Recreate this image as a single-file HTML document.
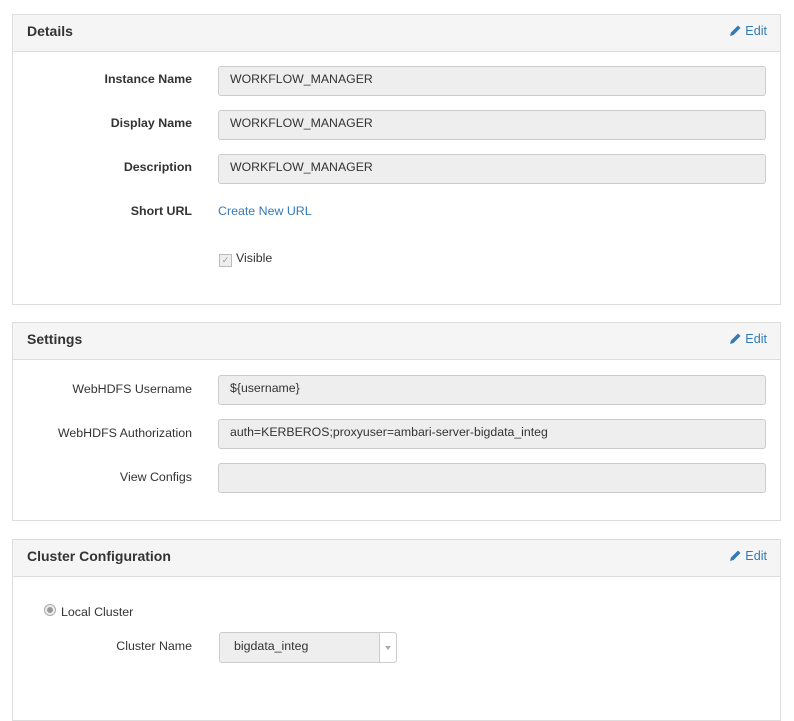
<!DOCTYPE html>
<html><head><style>
body{margin:0;background:#fff;font-family:"Liberation Sans",sans-serif;font-size:12.4px;color:#333;position:relative;width:794px;height:701px;overflow:hidden}
.p{position:absolute;left:12px;width:767px;border:1px solid #ddd;background:#fff}
.h{height:36px;background:#f5f5f5;border-bottom:1px solid #ddd;position:relative}
.h b{position:absolute;left:14px;top:8px;font-size:14px;font-weight:bold;color:#333}
.e{position:absolute;right:13px;top:9px;color:#337ab7;font-size:12.6px}
.e svg{vertical-align:-2px;margin-right:3px}
.l{position:absolute;width:179px;left:0;text-align:right;font-size:12.4px}
.i{position:absolute;left:205px;width:534px;height:28px;border:1px solid #ccc;border-radius:3px;background:#eee;line-height:24px;padding-left:11px;box-sizing:content-box;font-size:12.3px}
</style></head><body>
<div class="p" style="top:14px;height:289px">
 <div class="h"><b>Details</b><span class="e"><svg width="13" height="13" viewBox="0 0 13 13"><path d="M1 12l1-3.5 7-7 2.5 2.5-7 7z" fill="#337ab7"/></svg>Edit</span></div>
 <div class="l" style="top:57px;font-weight:bold">Instance Name</div><div class="i" style="top:51px;width:535px">WORKFLOW_MANAGER</div>
 <div class="l" style="top:101px;font-weight:bold">Display Name</div><div class="i" style="top:95px;width:535px">WORKFLOW_MANAGER</div>
 <div class="l" style="top:145px;font-weight:bold">Description</div><div class="i" style="top:139px;width:535px">WORKFLOW_MANAGER</div>
 <div class="l" style="top:189px;font-weight:bold">Short URL</div><div style="position:absolute;left:205px;top:189px;color:#337ab7">Create New URL</div>
 <div style="position:absolute;left:206px;top:239px;width:11px;height:11px;border:1px solid #bbb;background:#eee;font-size:9px;line-height:11px;text-align:center;color:#999">✓</div>
 <div style="position:absolute;left:223px;top:236px">Visible</div>
</div>
<div class="p" style="top:322px;height:197px">
 <div class="h"><b>Settings</b><span class="e"><svg width="13" height="13" viewBox="0 0 13 13"><path d="M1 12l1-3.5 7-7 2.5 2.5-7 7z" fill="#337ab7"/></svg>Edit</span></div>
 <div class="l" style="top:59px">WebHDFS Username</div><div class="i" style="top:52px;width:535px">${username}</div>
 <div class="l" style="top:103px">WebHDFS Authorization</div><div class="i" style="top:96px;width:535px">auth=KERBEROS;proxyuser=ambari-server-bigdata_integ</div>
 <div class="l" style="top:147px">View Configs</div><div class="i" style="top:140px;width:535px"></div>
</div>
<div class="p" style="top:539px;height:180px">
 <div class="h"><b>Cluster Configuration</b><span class="e"><svg width="13" height="13" viewBox="0 0 13 13"><path d="M1 12l1-3.5 7-7 2.5 2.5-7 7z" fill="#337ab7"/></svg>Edit</span></div>
 <div style="position:absolute;left:31px;top:64px;width:10px;height:10px;border:1px solid #aaa;border-radius:50%;background:#eee"><div style="margin:2px;width:6px;height:6px;border-radius:50%;background:#999"></div></div>
 <div style="position:absolute;left:48px;top:65px">Local Cluster</div>
 <div class="l" style="top:99px">Cluster Name</div>
 <div style="position:absolute;left:206px;top:92px;width:176px;height:29px;border:1px solid #ccc;border-radius:3px;background:#eee;line-height:26px">
  <span style="padding-left:14px">bigdata_integ</span>
  <div style="position:absolute;right:0;top:0;width:16px;height:29px;border-left:1px solid #ccc;background:#fff;border-radius:0 3px 3px 0"><div style="margin:13px 0 0 5px;width:0;height:0;border-left:3px solid transparent;border-right:3px solid transparent;border-top:4px solid #aaa"></div></div>
 </div>
</div>
</body></html>
